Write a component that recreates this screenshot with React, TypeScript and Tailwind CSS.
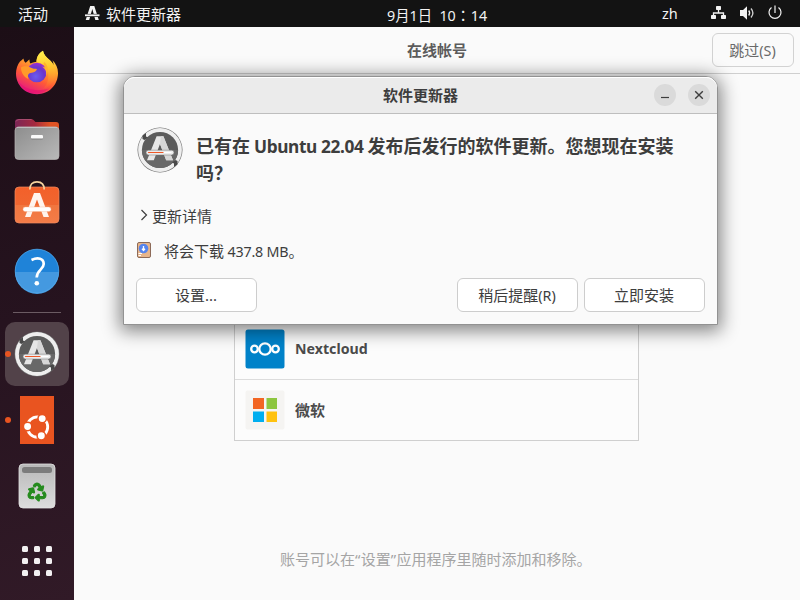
import React from 'react';
import { FaRecycle } from 'react-icons/fa';

const ui = "font-['Noto_Sans','Noto_Sans_CJK_SC',sans-serif]";

function Firefox() {
  return (
    <svg width="44" height="46" viewBox="0 0 44 46" className="block">
      <defs>
        <linearGradient id="ffBody" x1="0.8" y1="0.05" x2="0.35" y2="1">
          <stop offset="0" stopColor="#ffe94a" />
          <stop offset="0.35" stopColor="#ffa42c" />
          <stop offset="0.65" stopColor="#ff5a36" />
          <stop offset="1" stopColor="#e31587" />
        </linearGradient>
        <linearGradient id="ffTail" x1="0.4" y1="0" x2="0.5" y2="1">
          <stop offset="0" stopColor="#fff04c" />
          <stop offset="0.45" stopColor="#ffc52f" />
          <stop offset="1" stopColor="#ff7a2b" stopOpacity="0.1" />
        </linearGradient>
        <radialGradient id="ffGlobe" cx="0.45" cy="0.7" r="0.75">
          <stop offset="0" stopColor="#6a5cf0" />
          <stop offset="0.6" stopColor="#6a35cc" />
          <stop offset="1" stopColor="#a42bd6" />
        </radialGradient>
      </defs>
      <path d="M5 11.500C7 10 8 8.800 8.500 8.500C8.700 10.500 9.500 12 10.500 12.800C12 12 13.500 10 14.500 9.500C14.500 11 14.700 12.500 15.500 13.500C18 12 20.500 12 21.500 12C21.500 7 24 3 28 .8C28.500 4.500 31 7 34 9.500C36.500 11.500 37.500 13 38.500 15C38.500 12.500 37.800 11 37.200 10C41 13.500 43 18 43 23C43 35 34 44.200 22 44.200C10 44.200 1 35 1 23.500C1 19 2.500 14.500 5 11.500Z" fill="url(#ffBody)" />
      <path d="M21.500 12C21.500 7 24 3 28 .8C28.500 4.500 31 7 34 9.500C39 13.500 41.500 20 40 27C38 34 33 38 28 39C33 34 34 28 33 22C31.500 16 27 13 21.500 12Z" fill="url(#ffTail)" />
      <circle cx="21.800" cy="22.500" r="9.800" fill="url(#ffGlobe)" />
      <path d="M6 17.500C9 15.500 13 16.500 15.500 17.500C18 19 20 18.500 22 19C21.500 21.500 19 22.500 15.500 23C13 23.500 12.500 26 13.500 29C9 27 6 23 6 17.500Z" fill="#ff9a2a" />
      <path d="M27 16.500C30 18.500 32 21.500 31 26C34 22 33.500 15 29 12C28 14 29 15.500 30.500 17.500Z" fill="#ffb12d" />
      <path d="M3 31C10 40 22 42 34 38.500C26 46 10 46 3 31Z" fill="#e7106f" opacity="0.6" />
    </svg>
  );
}

function Files() {
  return (
    <svg width="46" height="44" viewBox="0 0 46 44" className="block">
      <defs>
        <linearGradient id="flBack" x1="0" y1="0" x2="1" y2="0">
          <stop offset="0" stopColor="#7b2656" />
          <stop offset="0.45" stopColor="#a5293f" />
          <stop offset="0.8" stopColor="#e05324" />
        </linearGradient>
        <linearGradient id="flFront" x1="0" y1="0" x2="1" y2="1">
          <stop offset="0" stopColor="#8d8d8d" />
          <stop offset="1" stopColor="#b9b9b9" />
        </linearGradient>
      </defs>
      <path d="M1 18V5Q1 2 4 2H17.500Q19 2 20 3.500L21.500 5H42Q45 5 45 8V20H1Z" fill="url(#flBack)" />
      <path d="M2 4.500Q3 2.500 5 2.500H17.500" fill="none" stroke="#b45a7c" strokeWidth="0.7" />
      <rect x="1" y="10" width="44" height="32.500" rx="3.500" fill="url(#flFront)" stroke="#b9b6b4" strokeWidth="0.7" />
      <path d="M3 10.400H43" stroke="#cbcbcb" strokeWidth="0.8" />
      <rect x="17" y="18" width="12" height="3.500" rx="1.200" fill="#fafafa" />
      <path d="M17.500 22.200H28.500" stroke="#777" strokeWidth="0.6" />
    </svg>
  );
}

function Software() {
  return (
    <svg width="46" height="44" viewBox="0 0 46 44" className="block">
      <defs>
        <linearGradient id="swBag" x1="0" y1="0" x2="0" y2="1">
          <stop offset="0" stopColor="#f3602a" />
          <stop offset="0.5" stopColor="#f06630" />
          <stop offset="0.51" stopColor="#f1763f" />
          <stop offset="1" stopColor="#f37c48" />
        </linearGradient>
      </defs>
      <rect x="1" y="7" width="44" height="36" rx="4" fill="url(#swBag)" stroke="#f08a5e" strokeWidth="0.7" />
      <path d="M15.800 9.500C15.800 4.500 18.500 1.800 23 1.800S30.200 4.500 30.200 9.500" fill="none" stroke="#f7d49e" strokeWidth="1.700" />
      <path d="M20 13H26L35 37H29.500L23 19.500L16.500 37H11Z" fill="#fff4ee" />
      <rect x="9" y="27" width="28" height="4.600" rx="2.300" fill="#fff" stroke="#f5b293" strokeWidth="0.4" />
    </svg>
  );
}

function Help() {
  return (
    <svg width="46" height="46" viewBox="0 0 46 46" className="block">
      <circle cx="23" cy="23" r="22" fill="#1f83d8" />
      <path d="M1 24H45A22 22 0 0 1 1 24Z" fill="#4499e0" />
      <circle cx="23" cy="23" r="21.800" fill="none" stroke="#54a8e6" strokeWidth="0.7" />
      <path d="M17.500 12C24 9 29.700 10.500 29.700 16C29.700 21.500 22.700 22 22.700 29.500" fill="none" stroke="#fff" strokeWidth="2.700" />
      <circle cx="22.800" cy="35.300" r="2.300" fill="#fff" />
    </svg>
  );
}

function Updater() {
  return (
    <svg width="46" height="46" viewBox="0 0 46 46" className="block">
      <circle cx="23" cy="23" r="22.500" fill="#6c6c6c" />
      <circle cx="23" cy="23" r="21.900" fill="#eeeeee" />
      <circle cx="23" cy="23" r="18.100" fill="#5b5b5b" />
      <path d="M4.900 23H41.100A18.100 18.100 0 0 1 4.900 23Z" fill="#686868" />
      <path d="M5.500 8.500L9 6V9.600L11 10.500L7.500 13L5.500 12Z M40.500 37.500L37 40V36.400L35 35.500L38.500 33L40.500 34Z" fill="#494949" />
      <path d="M19.600 9.300H26.400L36 33.300H29.200L23 17L16.800 33.300H10Z" fill="#e6e6e6" />
      <path d="M23 17L24 9.300H26.400L36 33.300H29.200Z" fill="#d6d6d6" />
      <rect x="9" y="23.200" width="28" height="4.800" rx="2.400" fill="#ececec" stroke="#777" strokeWidth="0.5" />
      <path d="M11.500 25.500H26.500" stroke="#ee5827" strokeWidth="1.200" strokeLinecap="round" />
      <path d="M26.500 25.500H34.500" stroke="#fff" strokeWidth="1.200" />
    </svg>
  );
}

function Ubuntu() {
  return (
    <svg width="34" height="48" viewBox="0 0 34 48" className="block">
      <rect width="34" height="48" fill="#e95420" />
      <circle cx="17.500" cy="31" r="10.200" fill="none" stroke="#fff" strokeWidth="2.800" />
      <g fill="#fff" stroke="#e95420" strokeWidth="1.500">
        <circle cx="7.600" cy="30.500" r="4.200" />
        <circle cx="22.200" cy="22.600" r="4.200" />
        <circle cx="21.300" cy="39.700" r="4.200" />
      </g>
    </svg>
  );
}

function Trash() {
  return (
    <div className="relative">
      <svg width="38" height="46" viewBox="0 0 38 46" className="block">
        <defs>
          <linearGradient id="trBin" x1="0" y1="0" x2="0" y2="1">
            <stop offset="0" stopColor="#b8b8b8" />
            <stop offset="1" stopColor="#dddddd" />
          </linearGradient>
        </defs>
        <rect x="1" y="1" width="36" height="44" rx="4" fill="url(#trBin)" stroke="#e2e2e2" strokeWidth="0.8" />
        <rect x="4" y="4" width="30" height="6" rx="2.500" fill="#7c7c7c" />
      </svg>
      <FaRecycle className="absolute left-[10px] top-[20px] h-[18px] w-[18px] overflow-visible stroke-[#268b1e] stroke-[34px] text-[#268b1e]" />
    </div>
  );
}

function Slot({ children, active, dot }: { children: React.ReactNode; active?: boolean; dot?: boolean }) {
  return (
    <div className={`relative mb-[2px] flex h-16 w-16 shrink-0 items-center justify-center rounded-[10px] ${active ? 'bg-[#524249]' : ''}`}>
      {dot && <span className="absolute left-0 top-[29px] h-1.5 w-1.5 rounded-full bg-[#e95420]" />}
      {children}
    </div>
  );
}

function TopBar() {
  return (
    <header className="flex h-[27px] shrink-0 bg-[#131313] text-[15px] leading-[28px] text-[#f2f2f2]">
      <div className="w-[85px] pl-[18px]">活动</div>
      <svg width="15" height="16" viewBox="0 0 15 16" className="mt-[5px] block shrink-0">
        <path d="M5.200 1H9.300L13.800 15H10.300L7.300 4L4.200 15H.7Z" fill="#f2f2f2" />
        <path d="M0 10.400H15" stroke="#131313" strokeWidth="3" />
        <path d="M0 10.300H14.500" stroke="#f2f2f2" strokeWidth="1.800" />
      </svg>
      <div className="w-[281px] pl-[6px]">软件更新器</div>
      <div className="w-[281px] whitespace-pre pl-[6px] pt-[1px] text-[14.300px] leading-[27px]">9月1日&nbsp; 10<span className="inline-block w-[15px] text-center font-['Noto_Sans_CJK_TC',sans-serif]" lang="zh-TW">：</span>14</div>
      <div className="-ml-[6px] w-[55px] pl-[6px] text-[14.500px] leading-[27px]">zh</div>
      <svg width="16" height="14" viewBox="0 0 16 14" className="mt-[6px] block shrink-0">
        <path d="M7.500 3V7M2.500 10V7H12.500V10" fill="none" stroke="#f2f2f2" strokeWidth="1.300" />
        <g fill="#f2f2f2">
          <rect x="5" y="0" width="5" height="4" rx="0.700" />
          <rect x="0" y="9" width="5" height="4" rx="0.700" />
          <rect x="10" y="9" width="5" height="4" rx="0.700" />
        </g>
      </svg>
      <svg width="16" height="16" viewBox="0 0 16 16" className="ml-[13px] mt-[5px] block shrink-0">
        <path d="M0 5H3L7 1.300V14.700L3 11H0Z" fill="#f2f2f2" />
        <path d="M8.700 5.500Q10.600 8 8.700 10.500" fill="none" stroke="#f2f2f2" strokeWidth="1.300" />
        <path d="M11 3.500Q14.800 8 11 12.500" fill="none" stroke="#cfcfcf" strokeWidth="1.300" />
      </svg>
      <svg width="14" height="15" viewBox="0 0 14 15" className="ml-[12px] mt-[5px] block shrink-0">
        <path d="M3.500 2.500A6 6 0 1 0 10.500 2.500M7 .5V8" fill="none" stroke="#f2f2f2" strokeWidth="1.200" />
      </svg>
    </header>
  );
}

function Dock() {
  return (
    <aside className="flex w-[74px] shrink-0 flex-col items-center bg-[linear-gradient(165deg,#1c0e16_0%,#26131f_50%,#311a27_100%)] pt-[14px]">
      <Slot><Firefox /></Slot>
      <Slot><Files /></Slot>
      <Slot><div className="mb-1.5"><Software /></div></Slot>
      <Slot><Help /></Slot>
      <div className="mb-[9px] mt-[7px] h-px w-12 shrink-0 bg-[#6b5b63]" />
      <Slot active dot><Updater /></Slot>
      <Slot dot><Ubuntu /></Slot>
      <Slot><Trash /></Slot>
      <div className="mt-[26px] grid grid-cols-3 gap-[6px]">
        {Array.from({ length: 9 }, (_, i) => <span key={i} className="h-[6px] w-[6px] rounded-[1.500px] bg-[#f2f0f1]" />)}
      </div>
    </aside>
  );
}

function Accounts() {
  return (
    <main className="flex grow flex-col bg-[#fafafa]">
      <div className="flex h-[47px] shrink-0 items-center justify-end border-b border-[#cfcfcf] pr-[6px]">
        <h1 className="grow pl-[88px] text-center text-[15px] font-bold leading-[46px] text-[#5c5c5c]">在线帐号</h1>
        <button className="h-[34px] w-[82px] rounded-[6px] border border-[#d2d2d2] pr-[1px] text-[15px] leading-[32px] text-[#6a6a6a]">跳过<span className="text-[14.300px]">(S)</span></button>
      </div>
      <div className="ml-[160px] mt-[244px] w-[405px] shrink-0 border-x border-b border-[#cfcfcf] bg-[#fcfcfc] text-[15px] font-bold text-[#4b4b4b]">
        <div className="flex h-[62px] items-center border-b border-[#dcdcdc] pl-[10px]">
          <svg width="40" height="40" viewBox="0 0 40 40" className="block">
            <rect x="0.500" y="0.500" width="39" height="39" rx="2.500" fill="#0082c9" />
            <g fill="none" stroke="#fff" strokeWidth="2.300">
              <circle cx="20" cy="20" r="5.700" /><circle cx="9.500" cy="20" r="3.300" /><circle cx="30.500" cy="20" r="3.300" />
            </g>
          </svg>
          <span className="pl-[10px] text-[14.200px]">Nextcloud</span>
        </div>
        <div className="flex h-[60px] items-center pl-[10px]">
          <svg width="40" height="40" viewBox="0 0 40 40" className="block">
            <rect x="0.500" y="0.500" width="39" height="39" rx="2" fill="#f5f4f2" />
            <path fill="#f26522" d="M8 8H19V19H8Z" /><path fill="#8dc63f" d="M21.500 8H32V19H21.500Z" />
            <path fill="#00aeef" d="M8 21.500H19V32H8Z" /><path fill="#ffc20e" d="M21.500 21.500H32V32H21.500Z" />
          </svg>
          <span className="pl-[10px]">微软</span>
        </div>
      </div>
      <p className="mt-[107px] whitespace-nowrap pl-[206px] text-[15px] leading-[22px] text-[#a5a5a5]">账号可以在<span className="tracking-[0.3px]">“</span>设置<span className="tracking-[0.3px]">”</span>应用程序里随时添加和移除。</p>
    </main>
  );
}

const button = 'h-[34px] w-[121px] rounded-[6px] border border-[#cdcdcd] bg-white pr-[1px] text-[15px] leading-[32px]';

function UpdateDialog() {
  return (
    <section className="absolute left-[123px] top-[76px] flex h-[249px] w-[595px] flex-col rounded-t-[12px] border border-[#929292] bg-[#fafafa] text-[#3d3d3d] shadow-[0_3px_18px_3px_rgba(0,0,0,0.48)]">
      <div className="flex h-[37px] shrink-0 items-center rounded-t-[11px] border-b border-[#bebebe] bg-[#ebebeb] pr-[7px] shadow-[inset_0_1px_0_#fff]">
        <h2 className="grow pl-[63px] text-center text-[15px] font-bold">软件更新器</h2>
        <button className="flex h-[22px] w-[22px] items-center justify-center rounded-full bg-[#dadada]">
          <svg width="10" height="10"><path d="M1 7.500H9" stroke="#3d3d3d" strokeWidth="1.200" /></svg>
        </button>
        <button className="ml-3 flex h-[22px] w-[22px] items-center justify-center rounded-full bg-[#dadada]">
          <svg width="10" height="10"><path d="M1.200 1.200L8.800 8.800M8.800 1.200L1.200 8.800" stroke="#3d3d3d" strokeWidth="1.400" /></svg>
        </button>
      </div>
      <div className="flex pl-[13px] pt-[13px]">
        <Updater />
        <p className="ml-[13px] mt-[6px] whitespace-nowrap text-[18px] font-bold leading-[27px]">
          已有在<span className="text-[17.300px] tracking-[-0.400px]"> Ubuntu 22.04 </span>发布后发行的软件更新。您想现在安装<br />吗？
        </p>
      </div>
      <div className="mt-[17px] flex h-[24px] items-center pl-[16px] text-[15px]">
        <svg width="8" height="12" viewBox="0 0 8 12" className="mb-[2px] mr-[4px] block"><path d="M1.500 1L6.500 6L1.500 11" fill="none" stroke="#3d3d3d" strokeWidth="1.200" /></svg>
        更新详情
      </div>
      <div className="mt-[11px] flex h-[24px] items-center pl-[13px] text-[15px]">
        <svg width="14" height="16" viewBox="0 0 14 16" className="mb-[2px] mr-[13px] block">
          <rect x="0.500" y="0.500" width="13" height="15" rx="1.500" fill="#e7b58b" stroke="#8c6a58" />
          <path d="M1.500 11.500H5M1.500 13.500H4" stroke="#fff" />
          <circle cx="6.500" cy="6.500" r="4.800" fill="#5685ee" />
          <path d="M6.500 4V8.500M5 6.800L6.500 8.500L8 6.800" fill="none" stroke="#fff" strokeWidth="1.300" />
        </svg>
        <span className="pt-[1px]">将会下载<span className="text-[14.300px] tracking-[-0.200px]">&nbsp;437.8&nbsp;MB</span>。</span>
      </div>
      <div className="mt-[15px] flex pl-[12px] pr-[12px]">
        <button className={button}>设置...</button>
        <button className={`${button} ml-auto mr-[6px]`}>稍后提醒<span className="text-[14.300px]">(R)</span></button>
        <button className={button}>立即安装</button>
      </div>
    </section>
  );
}

export default function App() {
  return (
    <div className={`relative flex h-[600px] w-[800px] flex-col overflow-hidden ${ui}`}>
      <TopBar />
      <div className="flex h-[573px] shrink-0">
        <Dock />
        <Accounts />
      </div>
      <UpdateDialog />
    </div>
  );
}
